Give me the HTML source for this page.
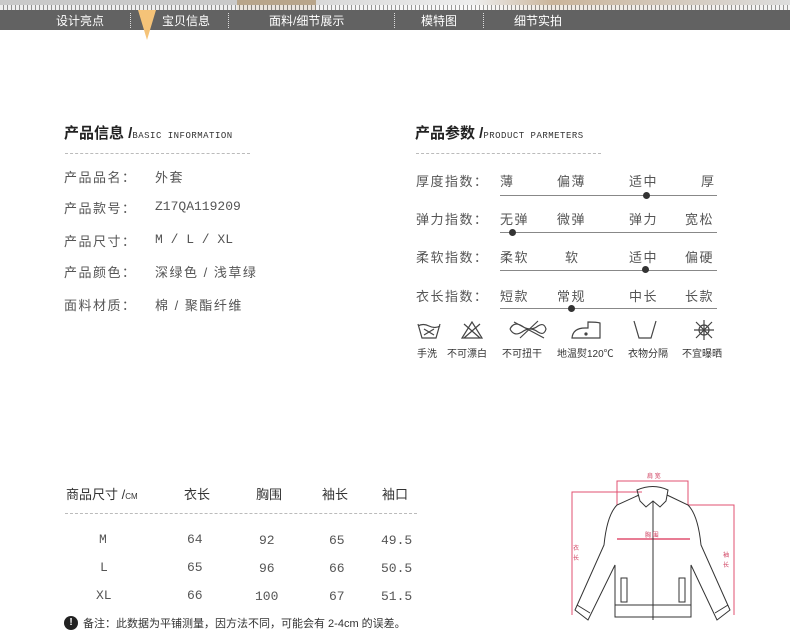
<!DOCTYPE html>
<html><head><meta charset="utf-8"><style>
*{margin:0;padding:0;box-sizing:border-box}
body{width:790px;height:632px;background:#fff;position:relative;overflow:hidden;font-family:"Liberation Sans","Noto Sans CJK SC",sans-serif;color:#444}
.a{position:absolute;white-space:nowrap}
.nav{position:absolute;left:0;top:10px;width:790px;height:20px;background:#626262;color:#fff;font-size:12px}
.nav span{position:absolute;top:2px}
.sep{position:absolute;top:3px;width:0;height:15px;border-left:1px dotted #ddd}
.h{font-size:15px;font-weight:bold;color:#222}
.h small{font-size:9px;font-weight:normal;font-family:"Liberation Mono",monospace;color:#333;letter-spacing:.5px}
.dash{position:absolute;height:0;border-top:1px dashed #bbb}
.l{font-size:13px;color:#555;letter-spacing:1.5px}
.m{font-family:"Liberation Mono",monospace;font-size:13px;color:#555}
.ln{position:absolute;left:500px;width:217px;height:1px;background:#888}
.dot{position:absolute;width:7px;height:7px;border-radius:50%;background:#333}
.ic{font-size:10px;color:#333}
</style></head><body>
<div class="a" style="left:0;top:0;width:790px;height:10px;background:linear-gradient(90deg,#c9c9c9 0,#c9c9c9 30%,#b8a58a 30%,#b8a58a 40%,#d8d8d8 40%,#eee 60%,#cab49a 70%,#ddd 100%)"></div>
<div class="a" style="left:0;top:5px;width:790px;height:5px;background:repeating-linear-gradient(90deg,#fff 0 3px,#777 3px 4px);opacity:.7"></div>
<div class="nav">
<span style="left:56px">设计亮点</span><div class="sep" style="left:130px"></div>
<span style="left:162px">宝贝信息</span><div class="sep" style="left:228px"></div>
<span style="left:269px">面料/细节展示</span><div class="sep" style="left:394px"></div>
<span style="left:421px">模特图</span><div class="sep" style="left:483px"></div>
<span style="left:514px">细节实拍</span>
</div>
<svg class="a" style="left:136px;top:10px" width="22" height="32"><polygon points="2,0 20,0 11,30" fill="#f5c378"/></svg>

<div class="a h" style="left:64px;top:122px">产品信息 /<small>BASIC INFORMATION</small></div>
<div class="dash" style="left:65px;top:153px;width:185px"></div>
<div class="a l" style="left:64px;top:167px">产品品名：</div><div class="a l" style="left:155px;top:167px">外套</div>
<div class="a l" style="left:64px;top:198px">产品款号：</div><div class="a m" style="left:155px;top:199px">Z17QA119209</div>
<div class="a l" style="left:64px;top:231px">产品尺寸：</div><div class="a m" style="left:155px;top:232px">M / L / XL</div>
<div class="a l" style="left:64px;top:262px">产品颜色：</div><div class="a l" style="left:155px;top:262px">深绿色 / 浅草绿</div>
<div class="a l" style="left:64px;top:295px">面料材质：</div><div class="a l" style="left:155px;top:295px">棉 / 聚酯纤维</div>

<div class="a h" style="left:415px;top:122px">产品参数 /<small>PRODUCT PARMETERS</small></div>
<div class="dash" style="left:416px;top:153px;width:185px"></div>

<div class="a l" style="left:416px;top:171px">厚度指数：</div>
<div class="a l" style="left:500px;top:171px">薄</div><div class="a l" style="left:557px;top:171px">偏薄</div><div class="a l" style="left:629px;top:171px">适中</div><div class="a l" style="left:701px;top:171px">厚</div>
<div class="ln" style="top:195px"></div><div class="dot" style="left:643px;top:192px"></div>

<div class="a l" style="left:416px;top:209px">弹力指数：</div>
<div class="a l" style="left:500px;top:209px">无弹</div><div class="a l" style="left:557px;top:209px">微弹</div><div class="a l" style="left:629px;top:209px">弹力</div><div class="a l" style="left:685px;top:209px">宽松</div>
<div class="ln" style="top:232px"></div><div class="dot" style="left:509px;top:229px"></div>

<div class="a l" style="left:416px;top:247px">柔软指数：</div>
<div class="a l" style="left:500px;top:247px">柔软</div><div class="a l" style="left:565px;top:247px">软</div><div class="a l" style="left:629px;top:247px">适中</div><div class="a l" style="left:685px;top:247px">偏硬</div>
<div class="ln" style="top:270px"></div><div class="dot" style="left:642px;top:266px"></div>

<div class="a l" style="left:416px;top:286px">衣长指数：</div>
<div class="a l" style="left:500px;top:286px">短款</div><div class="a l" style="left:557px;top:286px">常规</div><div class="a l" style="left:629px;top:286px">中长</div><div class="a l" style="left:685px;top:286px">长款</div>
<div class="ln" style="top:308px"></div><div class="dot" style="left:568px;top:305px"></div>

<svg class="a" style="left:410px;top:318px" width="330" height="26" fill="none" stroke="#444" stroke-width="1.2">
<path d="M8 6 L12 20 H26 L30 6 M8 8 Q13 5 19 8 Q25 11 30 8 M14 11 L24 17 M24 11 L14 17"/>
<path d="M62 4 L52 20 H72 Z M54 6 L70 20 M70 6 L54 20"/>
<path d="M100 11 Q104 3 112 8 Q120 14 128 8 Q134 4 136 11 Q134 18 128 14 Q120 8 112 14 Q104 19 100 11 M104 4 L134 20 M110 20 L128 3"/>
<path d="M162 20 Q163 10 175 10 H178 V4 Q187 4 190 5 V20 Z" /><circle cx="176" cy="16" r="1" fill="#444"/>
<path d="M224 3 L229 20 H241 L246 3"/>
<path d="M286 4 L302 20 M302 4 L286 20 M294 2 V22 M284 12 H304"/><circle cx="294" cy="12" r="5"/>
</svg>
<div class="a ic" style="left:417px;top:345px">手洗</div>
<div class="a ic" style="left:447px;top:345px">不可漂白</div>
<div class="a ic" style="left:502px;top:345px">不可扭干</div>
<div class="a ic" style="left:557px;top:345px">地温熨120℃</div>
<div class="a ic" style="left:628px;top:345px">衣物分隔</div>
<div class="a ic" style="left:682px;top:345px">不宜曝晒</div>

<div class="a" style="left:66px;top:484px;font-size:13px;color:#333">商品尺寸 /<span style="font-size:8px">CM</span></div>
<div class="a" style="left:184px;top:484px;font-size:13px;color:#333">衣长</div>
<div class="a" style="left:256px;top:484px;font-size:13px;color:#333">胸围</div>
<div class="a" style="left:322px;top:484px;font-size:13px;color:#333">袖长</div>
<div class="a" style="left:382px;top:484px;font-size:13px;color:#333">袖口</div>
<div class="dash" style="left:65px;top:513px;width:352px"></div>
<div class="a m" style="left:99px;top:532px">M</div><div class="a m" style="left:187px;top:532px">64</div><div class="a m" style="left:259px;top:533px">92</div><div class="a m" style="left:329px;top:533px">65</div><div class="a m" style="left:381px;top:533px">49.5</div>
<div class="a m" style="left:100px;top:560px">L</div><div class="a m" style="left:187px;top:560px">65</div><div class="a m" style="left:259px;top:561px">96</div><div class="a m" style="left:329px;top:561px">66</div><div class="a m" style="left:381px;top:561px">50.5</div>
<div class="a m" style="left:96px;top:588px">XL</div><div class="a m" style="left:187px;top:588px">66</div><div class="a m" style="left:255px;top:589px">100</div><div class="a m" style="left:329px;top:589px">67</div><div class="a m" style="left:381px;top:589px">51.5</div>
<div class="a" style="left:64px;top:616px;width:14px;height:14px;border-radius:50%;background:#222;color:#fff;font-size:10px;font-weight:bold;text-align:center;line-height:14px">!</div>
<div class="a" style="left:83px;top:615px;font-size:11px;color:#333">备注：此数据为平铺测量，因方法不同，可能会有 2-4cm 的误差。</div>

<svg class="a" style="left:560px;top:465px" width="190" height="167" fill="none" stroke="#333" stroke-width="1">
<path d="M57 40 V16 H128 V40" stroke="#e05070"/>
<path d="M82 27 H12 V150" stroke="#e05070"/>
<path d="M128 40 H174 V150" stroke="#e05070"/>
<path d="M57 74 H130" stroke="#e05070" stroke-width="1.5"/>
<path d="M77 25 Q93 18 108 25 L106 36 L100 42 L93 36 L86 42 L80 36 Z"/>
<path d="M79 30 L57 40 Q47 50 44 80 L15 145 L28 155 L55 100 V152 H131 V100 L157 155 L170 145 L141 80 Q138 50 128 40 L107 30"/>
<path d="M93 36 V155 M55 140 H131 M17 140 L30 148 M168 140 L155 148"/>
<path d="M61 113 L67 113 L67 137 L61 137 Z M119 113 L125 113 L125 137 L119 137 Z"/>
<text x="87" y="13" font-size="6" fill="#d04060" stroke="none">肩 宽</text>
<text x="85" y="72" font-size="6" fill="#d04060" stroke="none">胸 围</text>
<text x="13" y="85" font-size="6" fill="#d04060" stroke="none">衣</text><text x="13" y="95" font-size="6" fill="#d04060" stroke="none">长</text>
<text x="163" y="92" font-size="6" fill="#d04060" stroke="none">袖</text><text x="163" y="102" font-size="6" fill="#d04060" stroke="none">长</text>
</svg>
</body></html>
